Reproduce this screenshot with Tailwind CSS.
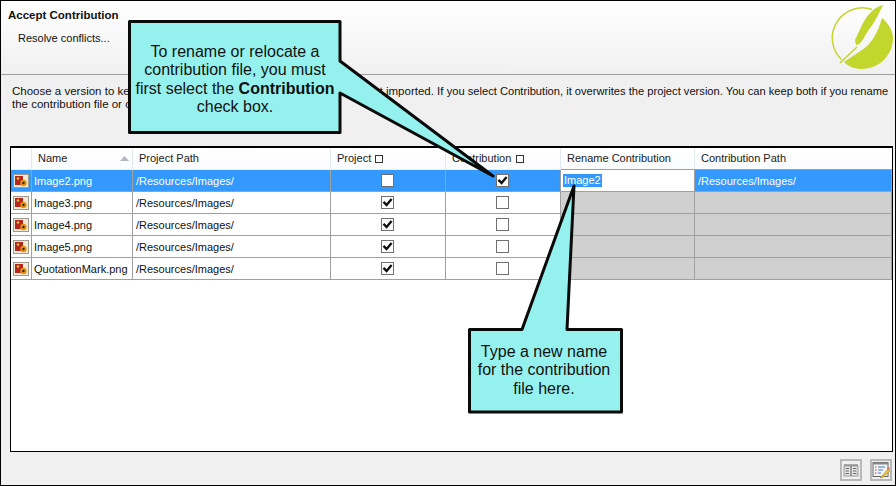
<!DOCTYPE html>
<html>
<head>
<meta charset="utf-8">
<script src="https://cdn.jsdelivr.net/npm/@tailwindcss/browser@4"></script>
</head>
<body class="m-0">
<div class="relative w-[896px] h-[486px] overflow-hidden border border-black bg-[#f0f0f0] font-['Liberation_Sans',sans-serif] text-[11px] text-[#111]">

  <!-- Header -->
  <div class="h-[74px] border-b border-[#a0a0a0] bg-gradient-to-b from-white to-[#f0f0f0] relative">
    <div class="pl-[7px] pt-[7px] font-bold text-[11.5px] leading-[14px]">Accept Contribution</div>
    <div class="pl-[17px] pt-[9px] leading-[14px]">Resolve conflicts...</div>
    <svg class="absolute left-[827px] top-[-1px]" width="67" height="73" viewBox="828 0 67 73">
      <path d="M841.500 59.500 A30 30 0 0 1 872 9.500" fill="none" stroke="#c2d62e" stroke-width="1.500"/>
      <path d="M882 18 C889 24 893 31 893 38 C893 55 879 69 862 69 C855 69 849 67 844 62 L862 50 C871 45 878 32 882 18Z" fill="#c2d62e"/>
      <path d="M883 5 C875 7 868 13 862 25 L855 40 L856 45 C860 45 863 40 866 34 L870 28 L873 24 L877 17Z" fill="#c2d62e"/>
      <path d="M857 47 L840 63" stroke="#c2d62e" stroke-width="1.500"/>
    </svg>
  </div>

  <!-- Intro text -->
  <div class="pl-[11px] pt-[10px] leading-[13px] whitespace-nowrap text-[11.500px]">
    <div>Choose a version to keep. If you select Project, the contribution file is not imported. If <span class="text-[11.150px]">you select Contribution, it overwrites the project version. You can keep both if you rename</span></div>
    <div>the contribution file or change its path.</div>
  </div>

  <!-- Grid -->
  <div class="absolute left-[9px] top-[145px] w-[883px] h-[306px] border border-t-2 border-black bg-white">
    <div class="grid grid-cols-[21px_101px_198px_115px_115px_134px_1fr] grid-rows-[21px] h-[22px] leading-[21px] border-b border-[#e8eef7] bg-gradient-to-b from-white to-[#fafbfd] text-[#222]">
      <div class="border-r border-[#e3e9f2]"></div>
      <div class="border-r border-[#e3e9f2] pl-[6px] relative">Name
        <svg class="absolute right-[3px] top-[8px]" width="9" height="5"><path d="M0 5L4.500 0L9 5Z" fill="#b4b8bd"/></svg>
      </div>
      <div class="border-r border-[#e3e9f2] pl-[6px]">Project Path</div>
      <div class="border-r border-[#e3e9f2] pl-[6px] flex items-center gap-[4px]">Project <span class="w-[8px] h-[8px] border border-[#333]"></span></div>
      <div class="border-r border-[#e3e9f2] pl-[6px] flex items-center gap-[5px]">Contribution <span class="w-[8px] h-[8px] border border-[#333]"></span></div>
      <div class="border-r border-[#e3e9f2] pl-[6px]">Rename Contribution</div>
      <div class="pl-[6px]">Contribution Path</div>
    </div>

    <!-- Row 1, selected -->
    <div class="grid grid-cols-[21px_101px_198px_115px_115px_134px_1fr] grid-rows-[21px] h-[22px] leading-[23px] border-b border-[#a0a0a0] bg-[#3399ff] text-white">
      <div class="border-r border-[#a0a0a0] flex items-center justify-center"><svg width="16" height="14" viewBox="0 0 16 14"><rect x=".5" y=".5" width="15" height="13" fill="#f1ead9" stroke="#a09a8c"/><rect x="2" y="2" width="8" height="9" fill="#b5271c"/><circle cx="5" cy="4.500" r="1.300" fill="#d9c23c"/><circle cx="10.500" cy="9" r="3.200" fill="#e8920c"/><circle cx="10.500" cy="9" r="1.200" fill="#222"/></svg></div>
      <div class="border-r border-[#a0a0a0] pl-[2px]">Image2.png</div>
      <div class="border-r border-[#a0a0a0] pl-[3px]">/Resources/Images/</div>
      <div class="border-r border-[#a0a0a0] flex items-center justify-center pr-[1px]"><span class="block w-[13px] h-[13px] border border-[#707070] bg-white"></span></div>
      <div class="border-r border-[#a0a0a0] flex items-center justify-center pr-[1px]"><span class="block w-[13px] h-[13px] border border-[#707070] bg-white"><svg width="11" height="11" viewBox="0 0 11 11"><path d="M1.500 4.800L4.600 8L9.600 2" fill="none" stroke="#111" stroke-width="2.400"/></svg></span></div>
      <div class="border-r border-[#a0a0a0] bg-white pl-[2px] flex items-center shadow-[0_-1px_0_#a0a0a0]"><span class="bg-[#3399ff] px-[1px] leading-[13px]">Image2</span></div>
      <div class="pl-[3px] border-r border-[#a0a0a0] shadow-[0_-1px_0_#a0a0a0]">/Resources/Images/</div>
    </div>

    <!-- Row 2 -->
    <div class="grid grid-cols-[21px_101px_198px_115px_115px_134px_1fr] grid-rows-[21px] h-[22px] leading-[23px] border-b border-[#a0a0a0]">
      <div class="border-r border-[#a0a0a0] flex items-center justify-center"><svg width="16" height="14" viewBox="0 0 16 14"><rect x=".5" y=".5" width="15" height="13" fill="#f1ead9" stroke="#a09a8c"/><rect x="2" y="2" width="8" height="9" fill="#b5271c"/><circle cx="5" cy="4.500" r="1.300" fill="#d9c23c"/><circle cx="10.500" cy="9" r="3.200" fill="#e8920c"/><circle cx="10.500" cy="9" r="1.200" fill="#222"/></svg></div>
      <div class="border-r border-[#a0a0a0] pl-[2px]">Image3.png</div>
      <div class="border-r border-[#a0a0a0] pl-[3px]">/Resources/Images/</div>
      <div class="border-r border-[#a0a0a0] flex items-center justify-center pr-[1px]"><span class="block w-[13px] h-[13px] border border-[#707070] bg-white"><svg width="11" height="11" viewBox="0 0 11 11"><path d="M1.500 4.800L4.600 8L9.600 2" fill="none" stroke="#111" stroke-width="2.400"/></svg></span></div>
      <div class="border-r border-[#a0a0a0] flex items-center justify-center pr-[1px]"><span class="block w-[13px] h-[13px] border border-[#707070] bg-white"></span></div>
      <div class="border-r border-[#a0a0a0] bg-[#d0d0d0]"></div>
      <div class="border-r border-[#a0a0a0] bg-[#d0d0d0]"></div>
    </div>

    <!-- Row 3 -->
    <div class="grid grid-cols-[21px_101px_198px_115px_115px_134px_1fr] grid-rows-[21px] h-[22px] leading-[23px] border-b border-[#a0a0a0]">
      <div class="border-r border-[#a0a0a0] flex items-center justify-center"><svg width="16" height="14" viewBox="0 0 16 14"><rect x=".5" y=".5" width="15" height="13" fill="#f1ead9" stroke="#a09a8c"/><rect x="2" y="2" width="8" height="9" fill="#b5271c"/><circle cx="5" cy="4.500" r="1.300" fill="#d9c23c"/><circle cx="10.500" cy="9" r="3.200" fill="#e8920c"/><circle cx="10.500" cy="9" r="1.200" fill="#222"/></svg></div>
      <div class="border-r border-[#a0a0a0] pl-[2px]">Image4.png</div>
      <div class="border-r border-[#a0a0a0] pl-[3px]">/Resources/Images/</div>
      <div class="border-r border-[#a0a0a0] flex items-center justify-center pr-[1px]"><span class="block w-[13px] h-[13px] border border-[#707070] bg-white"><svg width="11" height="11" viewBox="0 0 11 11"><path d="M1.500 4.800L4.600 8L9.600 2" fill="none" stroke="#111" stroke-width="2.400"/></svg></span></div>
      <div class="border-r border-[#a0a0a0] flex items-center justify-center pr-[1px]"><span class="block w-[13px] h-[13px] border border-[#707070] bg-white"></span></div>
      <div class="border-r border-[#a0a0a0] bg-[#d0d0d0]"></div>
      <div class="border-r border-[#a0a0a0] bg-[#d0d0d0]"></div>
    </div>

    <!-- Row 4 -->
    <div class="grid grid-cols-[21px_101px_198px_115px_115px_134px_1fr] grid-rows-[21px] h-[22px] leading-[23px] border-b border-[#a0a0a0]">
      <div class="border-r border-[#a0a0a0] flex items-center justify-center"><svg width="16" height="14" viewBox="0 0 16 14"><rect x=".5" y=".5" width="15" height="13" fill="#f1ead9" stroke="#a09a8c"/><rect x="2" y="2" width="8" height="9" fill="#b5271c"/><circle cx="5" cy="4.500" r="1.300" fill="#d9c23c"/><circle cx="10.500" cy="9" r="3.200" fill="#e8920c"/><circle cx="10.500" cy="9" r="1.200" fill="#222"/></svg></div>
      <div class="border-r border-[#a0a0a0] pl-[2px]">Image5.png</div>
      <div class="border-r border-[#a0a0a0] pl-[3px]">/Resources/Images/</div>
      <div class="border-r border-[#a0a0a0] flex items-center justify-center pr-[1px]"><span class="block w-[13px] h-[13px] border border-[#707070] bg-white"><svg width="11" height="11" viewBox="0 0 11 11"><path d="M1.500 4.800L4.600 8L9.600 2" fill="none" stroke="#111" stroke-width="2.400"/></svg></span></div>
      <div class="border-r border-[#a0a0a0] flex items-center justify-center pr-[1px]"><span class="block w-[13px] h-[13px] border border-[#707070] bg-white"></span></div>
      <div class="border-r border-[#a0a0a0] bg-[#d0d0d0]"></div>
      <div class="border-r border-[#a0a0a0] bg-[#d0d0d0]"></div>
    </div>

    <!-- Row 5 -->
    <div class="grid grid-cols-[21px_101px_198px_115px_115px_134px_1fr] grid-rows-[21px] h-[22px] leading-[23px] border-b border-[#a0a0a0]">
      <div class="border-r border-[#a0a0a0] flex items-center justify-center"><svg width="16" height="14" viewBox="0 0 16 14"><rect x=".5" y=".5" width="15" height="13" fill="#f1ead9" stroke="#a09a8c"/><rect x="2" y="2" width="8" height="9" fill="#b5271c"/><circle cx="5" cy="4.500" r="1.300" fill="#d9c23c"/><circle cx="10.500" cy="9" r="3.200" fill="#e8920c"/><circle cx="10.500" cy="9" r="1.200" fill="#222"/></svg></div>
      <div class="border-r border-[#a0a0a0] pl-[2px]">QuotationMark.png</div>
      <div class="border-r border-[#a0a0a0] pl-[3px]">/Resources/Images/</div>
      <div class="border-r border-[#a0a0a0] flex items-center justify-center pr-[1px]"><span class="block w-[13px] h-[13px] border border-[#707070] bg-white"><svg width="11" height="11" viewBox="0 0 11 11"><path d="M1.500 4.800L4.600 8L9.600 2" fill="none" stroke="#111" stroke-width="2.400"/></svg></span></div>
      <div class="border-r border-[#a0a0a0] flex items-center justify-center pr-[1px]"><span class="block w-[13px] h-[13px] border border-[#707070] bg-white"></span></div>
      <div class="border-r border-[#a0a0a0] bg-[#d0d0d0]"></div>
      <div class="border-r border-[#a0a0a0] bg-[#d0d0d0]"></div>
    </div>
  </div>

  <!-- Footer buttons -->
  <div class="absolute left-[839px] top-[458px] flex gap-[8px]">
    <div class="w-[22px] h-[22px] border-2 border-[#b8b8b8] flex items-center justify-center">
      <svg width="16" height="14" viewBox="0 0 16 14"><rect x="1" y="1" width="14" height="2" fill="#a8a8a8"/><rect x="1" y="3" width="6.500" height="10" fill="#e8e8e8" stroke="#777" stroke-width=".7"/><rect x="8.500" y="3" width="6.500" height="10" fill="#e8e8e8" stroke="#777" stroke-width=".7"/><path d="M2.500 5.500H6M2.500 8H6M2.500 10.500H6M10 5.500H13.500M10 8H13.500M10 10.500H13.500" stroke="#666"/></svg>
    </div>
    <div class="w-[22px] h-[22px] border-2 border-[#b8b8b8] flex items-center justify-center">
      <svg width="18" height="18" viewBox="0 0 18 18"><rect x="1" y="1.500" width="15" height="14" fill="#f4f4f4" stroke="#666"/><rect x="1" y="1.500" width="15" height="2" fill="#888"/><path d="M3 6H4.500M3 9H4.500M3 12H4.500" stroke="#d33"/><path d="M6 6H13M6 9H11M6 12H9" stroke="#47c"/><path d="M8 17L16 8L18 10L10 17Z" fill="#e6c13a" stroke="#a9872a" stroke-width=".5"/><rect x="15.500" y="6.500" width="2" height="2" fill="#d86060"/></svg>
    </div>
  </div>

  <!-- Callouts -->
  <svg class="absolute left-[-1px] top-[-1px]" width="896" height="486" viewBox="0 0 896 486">
    <path d="M129.500 21.500H340V61L493 176L340 93V132.500H129.500Z" fill="#95f1ee" stroke="#0a0a0a" stroke-width="3" stroke-linejoin="round"/>
    <path d="M469.500 329.500H522L574 186L567 329.500H621.500V412H469.500Z" fill="#95f1ee" stroke="#0a0a0a" stroke-width="3" stroke-linejoin="round"/>
  </svg>
  <div class="absolute left-[129px] top-[42px] w-[210px] text-center text-[16px] leading-[18.400px] text-[#111]">
    <div>To rename or relocate a</div>
    <div>contribution file, you must</div>
    <div>first select the <b>Contribution</b></div>
    <div>check box.</div>
  </div>
  <div class="absolute left-[467px] top-[342px] w-[152px] text-center text-[16px] leading-[18.400px] text-[#111]">
    <div>Type a new name</div>
    <div>for the contribution</div>
    <div>file here.</div>
  </div>
</div>
</body>
</html>
